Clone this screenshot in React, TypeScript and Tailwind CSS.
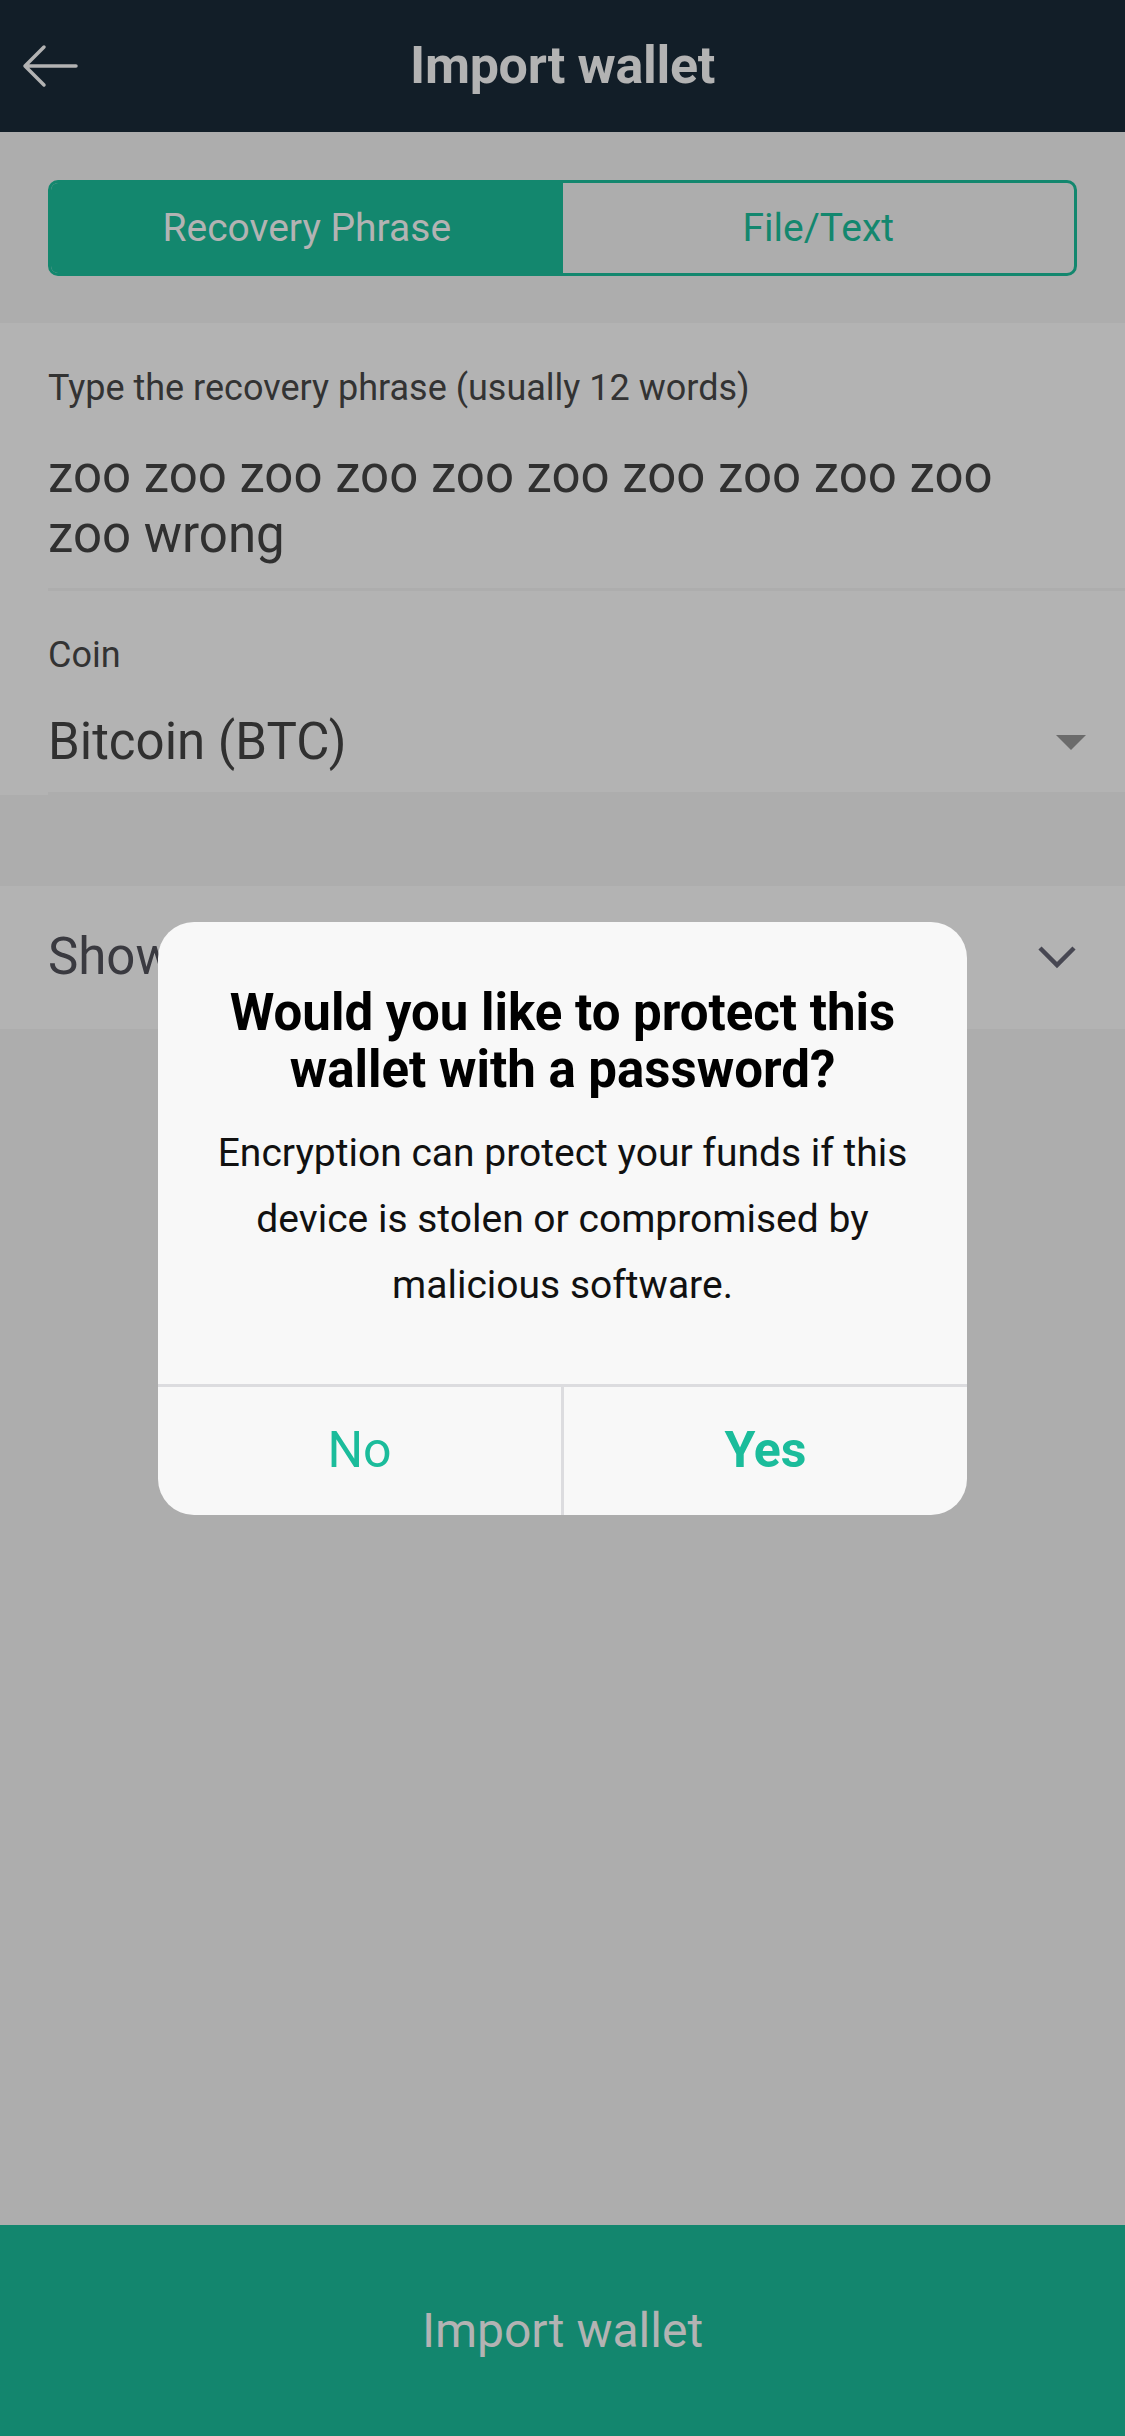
import React from "react"

const BackArrow: React.FC = () => (
  <svg width="56" height="44" viewBox="0 0 56 44" fill="none">
    <path d="M54 22H4M22 3L3 22L22 41" stroke="#b3b3b3" strokeWidth="3.5" strokeLinecap="round" strokeLinejoin="round" />
  </svg>
)

const ChevronDown: React.FC = () => (
  <svg width="40" height="26" viewBox="0 0 40 26" fill="none">
    <path d="M3 3L20 20L37 3" stroke="#474752" strokeWidth="4.5" />
  </svg>
)

const App: React.FC = () => {
  return (
    <div className="relative w-[1125px] h-[2436px] bg-[#adadad] flex flex-col font-['Roboto',sans-serif] overflow-hidden">
      {/* Header */}
      <div className="relative h-[132px] bg-[#121e28] flex items-center justify-center shrink-0">
        <div className="absolute left-[22px] top-[44px]">
          <BackArrow />
        </div>
        <span className="text-[52px] font-bold text-[#b3b3b3] tracking-[-0.3px]">Import wallet</span>
      </div>

      {/* Tabs */}
      <div className="px-[48px] pt-[48px] pb-[47px]">
        <div className="flex h-[96px] rounded-[10px] border-[3px] border-[#13876e] overflow-hidden">
          <div className="flex-1 bg-[#13876e] flex items-center justify-center text-[39px] text-[#b3b3b3]">
            Recovery Phrase
          </div>
          <div className="flex-1 flex items-center justify-center text-[39px] text-[#13876e]">
            File/Text
          </div>
        </div>
      </div>

      {/* Phrase + coin */}
      <div className="bg-[#b3b3b3] pt-[45px]">
        <div className="pl-[48px] pr-[40px]">
          <div className="text-[36px] leading-[40px] text-[#333333]">Type the recovery phrase (usually 12 words)</div>
          <div className="mt-[37px] text-[51px] leading-[60px] text-[#303030] pr-[60px]">
            zoo zoo zoo zoo zoo zoo zoo zoo zoo zoo zoo wrong
          </div>
        </div>
        <div className="ml-[48px] mt-[23px] h-[3px] bg-[#adadad]" />
        <div className="pl-[48px] pr-[39px] pt-[44px] pb-[20px]">
          <div className="text-[36px] leading-[40px] text-[#333333]">Coin</div>
          <div className="mt-[37px] flex items-center justify-between">
            <span className="text-[51px] leading-[60px] text-[#303030]">Bitcoin (BTC)</span>
            <div className="w-0 h-0 border-l-[15px] border-r-[15px] border-t-[15px] border-l-transparent border-r-transparent border-t-[#6b6b6b]" />
          </div>
        </div>
        <div className="ml-[48px] h-[3px] bg-[#adadad]" />
      </div>

      {/* Show options */}
      <div className="mt-[91px] h-[143px] bg-[#b3b3b3] pl-[48px] pr-[48px] flex items-center justify-between">
        <span className="text-[51px] text-[#3a3a40]">Show advanced options</span>
        <ChevronDown />
      </div>

      <div className="flex-1" />

      {/* Bottom button */}
      <div className="h-[211px] bg-[#13866e] flex items-center justify-center shrink-0">
        <span className="text-[48px] text-[#b3b3b3]">Import wallet</span>
      </div>

      {/* Dialog */}
      <div className="absolute inset-0 flex items-center justify-center">
        <div className="w-[809px] bg-[#f8f8f8] rounded-[36px] overflow-hidden flex flex-col">
          <div className="px-[30px] pt-[62px] pb-[66px] text-center">
            <div className="text-[51px] leading-[57px] font-bold text-black">
              Would you like to protect this wallet with a password?
            </div>
            <div className="mt-[22px] px-[10px] text-[39px] leading-[66px] text-[#111111]">
              Encryption can protect your funds if this device is stolen or compromised by malicious software.
            </div>
          </div>
          <div className="h-[3px] bg-[#dcdcdf]" />
          <div className="flex h-[128px]">
            <div className="flex-1 flex items-center justify-center text-[50px] text-[#1bbc9b]">No</div>
            <div className="w-[3px] bg-[#dcdcdf]" />
            <div className="flex-1 flex items-center justify-center text-[50px] font-bold text-[#1bbc9b]">Yes</div>
          </div>
        </div>
      </div>
    </div>
  )
}

export default App
